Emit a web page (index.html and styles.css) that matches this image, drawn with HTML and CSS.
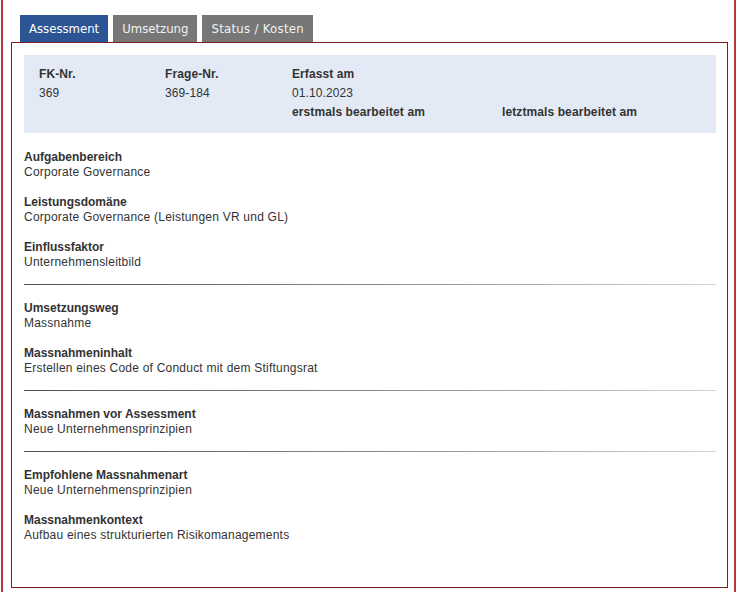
FILE: index.html
```html
<!DOCTYPE html>
<html lang="de">
<head>
	<meta charset="UTF-8">
	<title>Assessment</title>
	<link rel="stylesheet" href="styles.css">
</head>
<body>
	<div class="frame">
		<ul class="tabs">
			<li class="active">Assessment</li>
			<li>Umsetzung</li>
			<li>Status / Kosten</li>
		</ul>
		<div class="panel">
			<div class="infobox">
				<div class="head">FK-Nr.</div>
				<div class="head">Frage-Nr.</div>
				<div class="head">Erfasst am</div>
				<div></div>
				<div>369</div>
				<div>369-184</div>
				<div>01.10.2023</div>
				<div></div>
				<div></div>
				<div></div>
				<div class="head">erstmals bearbeitet am</div>
				<div class="head">letztmals bearbeitet am</div>
			</div>

			<div class="field">
				<div class="label">Aufgabenbereich</div>
				<div class="value">Corporate Governance</div>
			</div>
			<div class="field">
				<div class="label">Leistungsdomäne</div>
				<div class="value">Corporate Governance (Leistungen VR und GL)</div>
			</div>
			<div class="field">
				<div class="label">Einflussfaktor</div>
				<div class="value">Unternehmensleitbild</div>
			</div>
			<div class="divider"></div>
			<div class="field">
				<div class="label">Umsetzungsweg</div>
				<div class="value">Massnahme</div>
			</div>
			<div class="field">
				<div class="label">Massnahmeninhalt</div>
				<div class="value">Erstellen eines Code of Conduct mit dem Stiftungsrat</div>
			</div>
			<div class="divider"></div>
			<div class="field">
				<div class="label">Massnahmen vor Assessment</div>
				<div class="value">Neue Unternehmensprinzipien</div>
			</div>
			<div class="divider"></div>
			<div class="field">
				<div class="label">Empfohlene Massnahmenart</div>
				<div class="value">Neue Unternehmensprinzipien</div>
			</div>
			<div class="field">
				<div class="label">Massnahmenkontext</div>
				<div class="value">Aufbau eines strukturierten Risikomanagements</div>
			</div>
		</div>
	</div>
</body>
</html>
```

FILE: styles.css
```css
*{
	padding: 0;
	margin: 0;
	box-sizing: border-box;
}
body{
	background: #fff;
	font-family: "Liberation Sans", Arial, sans-serif;
	font-size: 12px;
	color: #333;
}
.frame{
	margin: 0 2px 0 1px;
	min-height: 592px;
	border-left: 2px solid #b8383a;
	border-right: 2px solid #b8383a;
	padding-top: 15px;
}
.tabs{
	display: flex;
	gap: 5px;
	margin-left: 17px;
	list-style: none;
}
.tabs li{
	height: 27px;
	line-height: 27px;
	padding: 0 9px;
	background: #777;
	color: #f2f2f2;
	font-family: "DejaVu Sans Condensed", "DejaVu Sans", sans-serif;
	font-size: 13px;
}
.tabs li:last-child{
	letter-spacing: 0.3px;
}
.tabs li.active{
	background: #2c5595;
	color: #fff;
}
.panel{
	margin: 0 6px 0 8px;
	border: 1px solid #7a1f1f;
	padding: 12px 11px 44px 12px;
}
.infobox{
	display: grid;
	grid-template-columns: 126px 127px 210px auto;
	background: #e4eaf5;
	padding: 10px 15px 11px;
	line-height: 19px;
	margin-bottom: 17px;
	letter-spacing: 0.1px;
}
.head{
	font-weight: bold;
}
.field{
	line-height: 15px;
}
.field + .field{
	margin-top: 15px;
}
.label{
	font-weight: bold;
}
.value{
	letter-spacing: 0.22px;
}
.divider{
	height: 1px;
	margin: 14px 0 16px;
	background: linear-gradient(to right, #4f4f4f, #888 50%, #d4d4d4);
}
```
